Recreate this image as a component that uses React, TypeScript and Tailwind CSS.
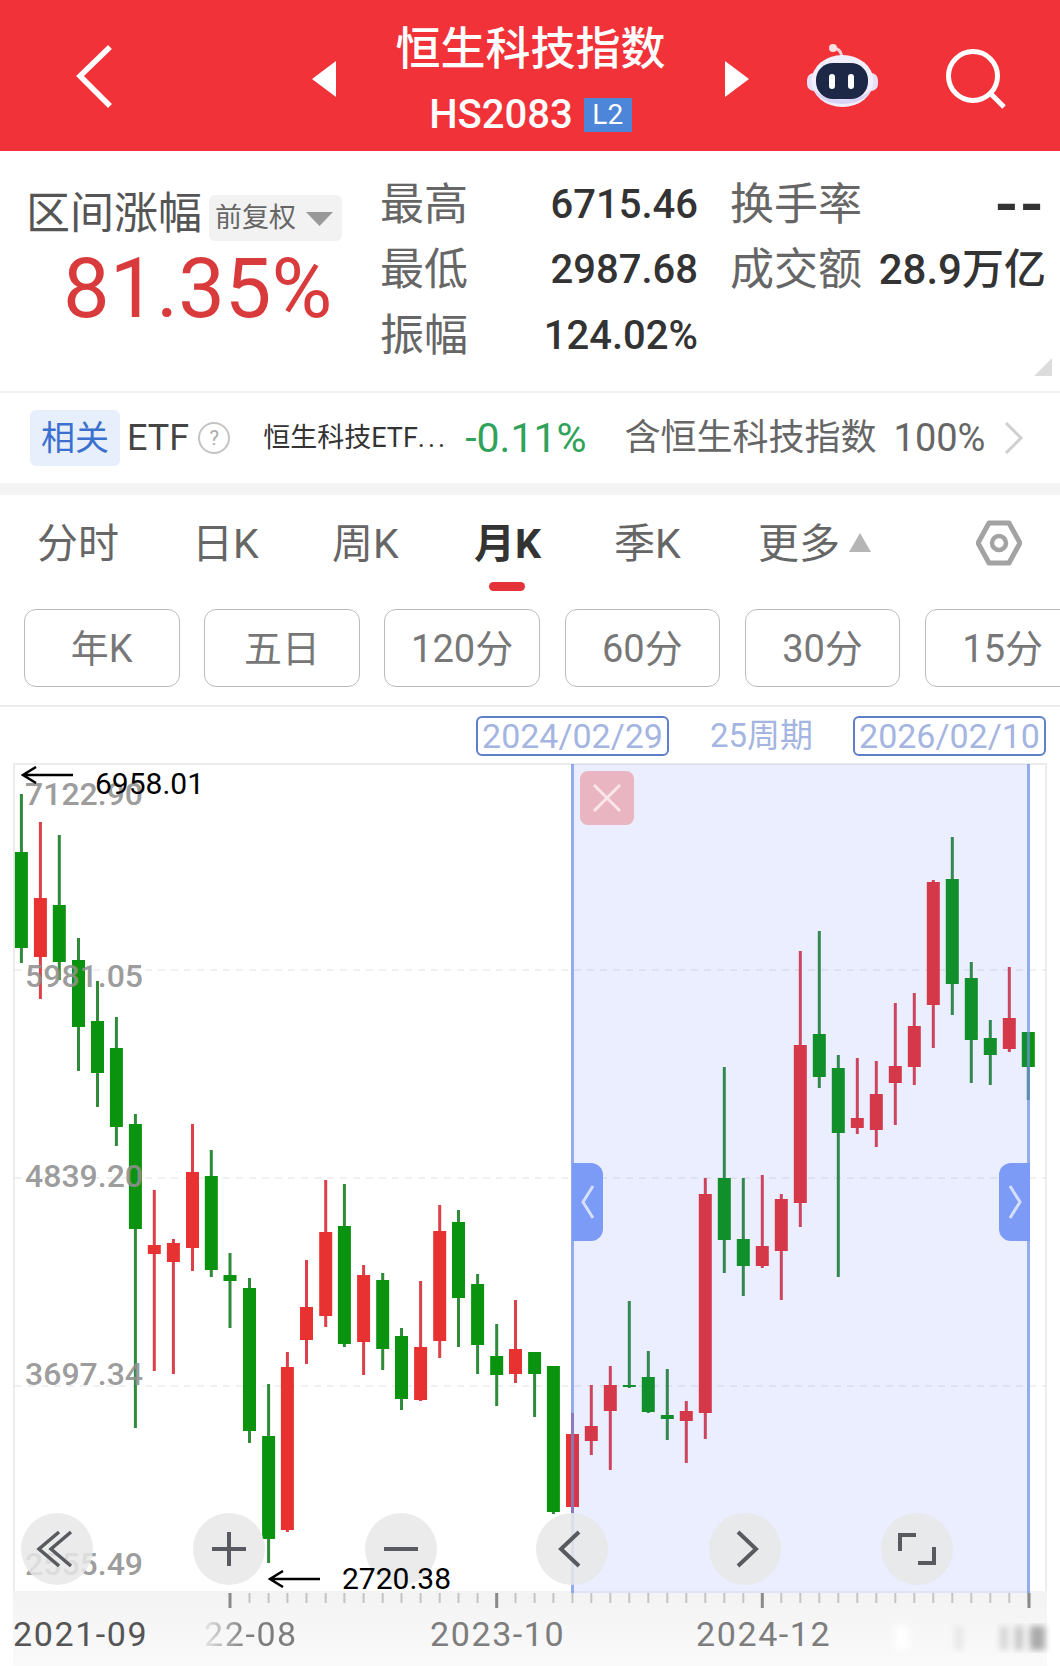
import React from "react";

// x, wickTop, wickBottom, bodyTop, bodyBottom, up
type TCandle = [number, number, number, number, number, number];

const candles: TCandle[] = [
  [21.4, 794, 963, 852, 948, 0],
  [40.4, 822, 999, 898, 957, 1],
  [59.3, 835, 980, 905, 962, 0],
  [78.5, 938, 1071, 960, 1027, 0],
  [97.5, 981, 1107, 1021, 1073, 0],
  [116.4, 1017, 1146, 1048, 1127, 0],
  [135.4, 1114, 1428, 1124, 1229, 0],
  [154.3, 1190, 1371, 1245, 1254, 1],
  [173.4, 1239, 1374, 1243, 1262, 1],
  [192.5, 1124, 1271, 1172, 1248, 1],
  [211.3, 1150, 1277, 1176, 1270, 0],
  [230, 1253, 1328, 1275, 1281, 0],
  [249.5, 1278, 1443, 1288, 1431, 0],
  [268.6, 1384, 1563, 1436, 1539, 0],
  [287.4, 1352, 1532, 1367, 1530, 1],
  [306.5, 1260, 1364, 1307, 1340, 1],
  [325.7, 1180, 1327, 1232, 1316, 1],
  [344.4, 1184, 1347, 1226, 1344, 0],
  [363.6, 1265, 1375, 1275, 1342, 1],
  [382.7, 1273, 1370, 1280, 1349, 0],
  [401.5, 1328, 1410, 1336, 1399, 0],
  [420.6, 1281, 1401, 1347, 1400, 1],
  [439.7, 1205, 1358, 1231, 1341, 1],
  [458.5, 1210, 1347, 1222, 1298, 0],
  [477.6, 1274, 1374, 1284, 1345, 0],
  [496.7, 1324, 1406, 1356, 1375, 0],
  [515.5, 1300, 1383, 1349, 1374, 1],
  [534.6, 1352, 1417, 1352, 1374, 0],
  [553.4, 1366, 1514, 1366, 1512, 0],
  [572.5, 1413, 1513, 1434, 1507, 1],
  [591.3, 1385, 1455, 1426, 1441, 1],
  [610.3, 1366, 1470, 1385, 1411, 1],
  [629.3, 1301, 1388, 1385, 1387, 0],
  [648.3, 1351, 1413, 1377, 1412, 0],
  [667.3, 1369, 1440, 1415, 1419, 0],
  [686.3, 1401, 1463, 1411, 1421, 1],
  [705.3, 1178, 1439, 1194, 1413, 1],
  [724.3, 1067, 1273, 1178, 1240, 0],
  [743.3, 1178, 1296, 1239, 1266, 0],
  [762.3, 1175, 1268, 1246, 1266, 1],
  [781.3, 1194, 1300, 1199, 1251, 1],
  [800.3, 951, 1227, 1045, 1203, 1],
  [819.3, 931, 1088, 1034, 1077, 0],
  [838.3, 1055, 1277, 1068, 1133, 0],
  [857.3, 1058, 1134, 1118, 1128, 1],
  [876.3, 1061, 1147, 1094, 1130, 1],
  [895.3, 1003, 1125, 1066, 1083, 1],
  [914.3, 993, 1085, 1026, 1067, 1],
  [933.3, 880, 1048, 882, 1005, 1],
  [952.3, 837, 1015, 879, 984, 0],
  [971.3, 962, 1083, 978, 1040, 0],
  [990.3, 1020, 1085, 1038, 1055, 0],
  [1009.3, 967, 1052, 1018, 1049, 1],
  [1028.3, 1032, 1100, 1032, 1067, 0],
];

const tabs = [
  { label: "分时", width: "w-[155px]" },
  { label: "日K", width: "w-[140px]" },
  { label: "周K", width: "w-[142px]" },
  { label: "月K", width: "w-[140px]", active: true },
  { label: "季K", width: "w-[144px]" },
];

const periods = ["年K", "五日", "120分", "60分", "30分", "15分"];

const stats = [
  { label: "最高", value: "6715.46", label2: "换手率", value2: "--", value2Class: "text-[66px] tracking-[3px]" },
  { label: "最低", value: "2987.68", label2: "成交额", value2: "28.9万亿", value2Class: "text-[42px]" },
  { label: "振幅", value: "124.02%", label2: "", value2: "", value2Class: "" },
];

const axisLabels = [
  { text: "7122.90", className: "top-[15px]" },
  { text: "5981.05", className: "top-[197px]" },
  { text: "4839.20", className: "top-[397px]" },
  { text: "3697.34", className: "top-[595px]" },
  { text: "2555.49", className: "top-[785px]" },
];

const Robot = () => (
  <svg width="73" height="66" viewBox="0 0 73 66" className="shrink-0">
    <path d="M27 5 C32 5 35 8 36 14" fill="none" stroke="#f7cfd4" strokeWidth="3" strokeLinecap="round" />
    <circle cx="27" cy="5" r="4" fill="#fbdfe2" />
    <rect x="1" y="30" width="71" height="18" rx="7" fill="#e7dff5" />
    <ellipse cx="36.5" cy="38" rx="31" ry="26" fill="#f1effc" />
    <path d="M8 46 C14 66 59 66 65 46 C56 60 17 60 8 46 Z" fill="#d9d3f5" />
    <rect x="10" y="20" width="52" height="36" rx="17" fill="#1d2746" />
    <rect x="23" y="31" width="6" height="15" rx="3" fill="#fff" />
    <rect x="42" y="31" width="6" height="15" rx="3" fill="#fff" />
  </svg>
);

const Header = () => (
  <div className="flex h-[151px] items-start bg-[#f13239] text-white">
    <svg width="36" height="63" viewBox="0 0 36 63" className="ml-[76px] mt-[45px] shrink-0">
      <path d="M34 2 L4 31 L34 61" fill="none" stroke="#fff" strokeWidth="5.5" />
    </svg>
    <svg width="24" height="36" viewBox="0 0 24 36" className="ml-[200px] mt-[61px] shrink-0">
      <path d="M24 0 V36 L0 18 Z" fill="#fff" />
    </svg>
    <div className="flex w-[389px] flex-col items-center pt-[25px]">
      <div className="text-[45px] font-medium leading-[50px]">恒生科技指数</div>
      <div className="mt-[23px] flex h-[34px] items-center gap-[11px]">
        <span className="text-[40px] font-medium leading-[34px]">HS2083</span>
        <span className="flex h-[34px] w-[48px] items-center justify-center bg-[#4d85d9] text-[28px] leading-none">L2</span>
      </div>
    </div>
    <svg width="24" height="36" viewBox="0 0 24 36" className="mt-[61px] shrink-0">
      <path d="M0 0 V36 L24 18 Z" fill="#fff" />
    </svg>
    <div className="ml-[57px] mt-[43px]">
      <Robot />
    </div>
    <svg width="60" height="60" viewBox="0 0 60 60" className="ml-[67px] mt-[49px] shrink-0">
      <circle cx="27" cy="27" r="24.5" fill="none" stroke="#fff" strokeWidth="5" />
      <path d="M44 44 L58 58" fill="none" stroke="#fff" strokeWidth="5" />
    </svg>
  </div>
);

const Stats = () => (
  <div className="relative flex h-[242px] border-b-2 border-[#f0f0f0]">
    <div className="w-[380px] shrink-0 pl-[26px] pt-[36px]">
      <div className="flex items-start">
        <span className="text-[44px] leading-[54px] text-[#555]">区间涨幅</span>
        <div className="ml-[7px] mt-[8px] flex h-[46px] w-[133px] items-center rounded-md bg-[#f2f2f2] pl-[6px]">
          <span className="text-[27px] leading-none text-[#666]">前复权</span>
          <svg width="27" height="14" viewBox="0 0 27 14" className="ml-[10px] mt-[2px]">
            <path d="M0 0 H27 L13.5 14 Z" fill="#999" />
          </svg>
        </div>
      </div>
      <div className="ml-[37px] mt-[3px] text-[83px] leading-[90px] text-[#d93a3c]">81.35%</div>
    </div>
    <div className="grid h-fit w-[666px] grid-cols-[318px_316px] gap-x-[32px] pt-[21px]">
      {stats.map((row) => (
        <React.Fragment key={row.label}>
          <div className="flex h-[65.5px] items-center justify-between">
            <span className="text-[44px] leading-none text-[#666]">{row.label}</span>
            <span className="text-[40px] font-medium leading-none text-[#333]">{row.value}</span>
          </div>
          <div className="flex h-[65.5px] items-center justify-between">
            <span className="text-[44px] leading-none text-[#666]">{row.label2}</span>
            <span className={`font-medium leading-none text-[#333] ${row.value2Class}`}>{row.value2}</span>
          </div>
        </React.Fragment>
      ))}
    </div>
    <svg width="18" height="18" viewBox="0 0 18 18" className="absolute bottom-[15px] right-[8px]">
      <path d="M18 0 V18 H0 Z" fill="#dcdcdc" />
    </svg>
  </div>
);

const EtfRow = () => (
  <div className="flex h-[90px] items-center pl-[30px]">
    <span className="flex h-[56px] w-[90px] items-center justify-center rounded-md bg-[#e8effc] text-[34px] text-[#3b70cf]">相关</span>
    <span className="ml-[7px] text-[36px] leading-none text-[#444]">ETF</span>
    <span className="ml-[9px] flex h-[32px] w-[32px] items-center justify-center rounded-full border-2 border-[#c4c4c4] text-[20px] leading-none text-[#aaa]">?</span>
    <span className="ml-[33px] w-[202px] text-[27px] leading-none text-[#333]">
      恒生科技ETF<span className="tracking-[3px]">...</span>
    </span>
    <span className="text-[41px] leading-none text-[#30a25a]">-0.11%</span>
    <span className="ml-[38px] text-[36px] leading-none text-[#666]">含恒生科技指数</span>
    <span className="ml-[17px] text-[38px] leading-none text-[#666]">100%</span>
    <svg width="20" height="32" viewBox="0 0 20 32" className="ml-[19px]">
      <path d="M2 1 L17 16 L2 31" fill="none" stroke="#cfcfcf" strokeWidth="3" />
    </svg>
  </div>
);

const Tabs = () => (
  <div className="flex h-[114px] items-start pl-[37px] pt-[24px]">
    {tabs.map((tab) => (
      <div key={tab.label} className={`${tab.width} relative shrink-0`}>
        <span className={`text-[41px] leading-[50px] ${tab.active ? "font-bold text-[#333]" : "text-[#666]"}`}>{tab.label}</span>
        {tab.active && <div className="absolute left-[15px] top-[63px] h-[9px] w-[36px] rounded-full bg-[#e5333a]" />}
      </div>
    ))}
    <span className="text-[41px] leading-[50px] text-[#666]">更多</span>
    <svg width="22" height="19" viewBox="0 0 22 19" className="ml-[9px] mt-[14px]">
      <path d="M11 0 L22 19 H0 Z" fill="#b5b5b5" />
    </svg>
    <svg width="46" height="46" viewBox="0 0 46 46" className="ml-[105px] mt-[1px]">
      <path d="M13 3 H33 L44 23 L33 43 H13 L2 23 Z" fill="none" stroke="#a3a3a3" strokeWidth="5" strokeLinejoin="round" />
      <circle cx="23" cy="23" r="7" fill="none" stroke="#a3a3a3" strokeWidth="4.5" />
    </svg>
  </div>
);

const Periods = () => (
  <div className="flex h-[98px] gap-[24.7px] overflow-hidden border-b-2 border-[#ececec] pl-[24px]">
    {periods.map((item) => (
      <div key={item} className="flex h-[78px] w-[155.5px] shrink-0 items-center justify-center rounded-xl border border-[#bbb] pt-[2px] text-[38px] leading-none text-[#777]">
        {item}
      </div>
    ))}
  </div>
);

const DateRow = () => (
  <div className="flex h-[56px] items-start pl-[476px] pt-[9px] text-[34px] leading-none text-[#a4b5e2]">
    <span className="flex h-[40px] w-[193px] items-center justify-center rounded-md border-2 border-[#5f7fcc]">2024/02/29</span>
    <span className="ml-[41px] w-[143px] pt-[3px] text-[33px]">25周期</span>
    <span className="flex h-[40px] w-[193px] items-center justify-center rounded-md border-2 border-[#5f7fcc]">2026/02/10</span>
  </div>
);

const RoundButton = ({ className, children }: { className: string; children: React.ReactNode }) => (
  <div className={`absolute top-[750px] flex h-[72px] w-[72px] items-center justify-center rounded-full bg-[#e8e8e8]/85 ${className}`}>
    <svg width="44" height="44" viewBox="0 0 44 44" fill="none" stroke="#585a60" strokeWidth="4">
      {children}
    </svg>
  </div>
);

const Chart = () => {
  const smallTicks: number[] = [];
  for (let i = 12; i < 54; i++) smallTicks.push(candles[i][0]);
  const bigTicks = [230, 496.7, 762.3, 1029];

  return (
    <div className="relative h-[903px] w-[1060px] bg-white">
      {/* chart frame */}
      <div className="absolute left-[13px] top-0 h-[830px] w-[1034px] border-2 border-b-0 border-[#ececec]" />
      <div className="absolute left-[13px] top-[828px] h-[75px] w-[1034px] bg-gradient-to-b from-[#f3f3f3] to-[#fafafa]" />

      <svg viewBox="0 763 1060 903" className="absolute left-0 top-0 h-[903px] w-[1060px]">
        {[970, 1178, 1386].map((y) => (
          <line key={y} x1="15" x2="1046" y1={y} y2={y} stroke="#e2e2e2" strokeWidth="1" strokeDasharray="7 6" />
        ))}
        {candles.map(([x, wickTop, wickBottom, bodyTop, bodyBottom, up]) => (
          <g key={x}>
            <rect x={x - 1.5} y={wickTop} width="3" height={wickBottom - wickTop} fill={up ? "#dc4048" : "#2f8a3a"} />
            <rect x={x - 6.5} y={bodyTop} width="13" height={bodyBottom - bodyTop} fill={up ? "#e83232" : "#09930f"} />
          </g>
        ))}
        {smallTicks.map((x) => (
          <rect key={x} x={x - 1} y="1593" width="2" height="10" fill="#c4c4c4" />
        ))}
        {bigTicks.map((x) => (
          <rect key={x} x={x - 1.5} y="1593" width="3" height="15" fill="#8a8a8a" />
        ))}
        <defs>
          <filter id="smudge">
            <feGaussianBlur stdDeviation="3" />
          </filter>
        </defs>
        <g filter="url(#smudge)">
          <rect x="895" y="1626" width="14" height="24" fill="#fff" />
          <rect x="955" y="1626" width="8" height="24" fill="#e6e6e6" />
          <rect x="1000" y="1626" width="8" height="24" fill="#d4d4d4" />
          <rect x="1015" y="1626" width="8" height="24" fill="#c4c4c4" />
          <rect x="1030" y="1626" width="15" height="24" fill="#aaa" />
        </g>
      </svg>

      {axisLabels.map((label) => (
        <span key={label.text} className={`absolute left-[25px] text-[32px] font-medium leading-none text-[#8f8f8f]/90 ${label.className}`}>
          {label.text}
        </span>
      ))}

      {/* selected range */}
      <div className="absolute left-[571px] top-[1px] h-[829px] w-[459px] border-x-[3px] border-[#6f8fe6]/70 bg-[#4f70f5]/[0.12]" />
      <div className="absolute left-[580px] top-[8px] flex h-[54px] w-[54px] items-center justify-center rounded-lg bg-[#e9b5c0]">
        <svg width="30" height="30" viewBox="0 0 30 30" fill="none" stroke="#fbe6e9" strokeWidth="3">
          <path d="M2 2 L28 28 M28 2 L2 28" />
        </svg>
      </div>
      <div className="absolute left-[572px] top-[400px] flex h-[78px] w-[31px] items-center justify-center rounded-r-xl bg-[#7c9bf6]">
        <svg width="14" height="34" viewBox="0 0 14 34" fill="none" stroke="#d6e0fb" strokeWidth="3">
          <path d="M12 1 L2 17 L12 33" />
        </svg>
      </div>
      <div className="absolute left-[999px] top-[400px] flex h-[78px] w-[31px] items-center justify-center rounded-l-xl bg-[#7c9bf6]">
        <svg width="14" height="34" viewBox="0 0 14 34" fill="none" stroke="#d6e0fb" strokeWidth="3">
          <path d="M2 1 L12 17 L2 33" />
        </svg>
      </div>

      {/* hand drawn notes on the screenshot */}
      <svg width="52" height="18" viewBox="0 0 52 18" className="absolute left-[21px] top-[3px]">
        <path d="M52 9 H2 M15 1 L2 9 L15 17" fill="none" stroke="#000" strokeWidth="2.5" />
      </svg>
      <span className="absolute left-[95px] top-[3px] text-[30px] leading-[36px] text-black">6958.01</span>

      <RoundButton className="left-[21px]">
        <path d="M24 5 L4 22 L24 39 M36 5 L16 22 L36 39" strokeWidth="3.5" />
      </RoundButton>
      <RoundButton className="left-[193px]">
        <path d="M22 5 V39 M5 22 H39" />
      </RoundButton>
      <RoundButton className="left-[365px]">
        <path d="M5 22 H39" />
      </RoundButton>
      <RoundButton className="left-[536px]">
        <path d="M29 5 L11 22 L29 39" />
      </RoundButton>
      <RoundButton className="left-[709px]">
        <path d="M15 5 L33 22 L15 39" />
      </RoundButton>
      <RoundButton className="left-[881px]">
        <path d="M21 8 H5 V24 M23 36 H39 V20" />
      </RoundButton>

      <svg width="52" height="18" viewBox="0 0 52 18" className="absolute left-[268px] top-[807px]">
        <path d="M52 9 H2 M15 1 L2 9 L15 17" fill="none" stroke="#000" strokeWidth="2.5" />
      </svg>
      <span className="absolute left-[342px] top-[798px] text-[30px] leading-[36px] text-black">2720.38</span>

      {[
        { text: "2021-09", left: "left-[13px]", color: "text-[#555]" },
        { text: "2023-10", left: "left-[430px]", color: "text-[#7d7d7d]" },
        { text: "2024-12", left: "left-[696px]", color: "text-[#7d7d7d]" },
      ].map((date) => (
        <span key={date.text} className={`absolute top-[853px] text-[34px] leading-[36px] tracking-[1.6px] ${date.left} ${date.color}`}>
          {date.text}
        </span>
      ))}
      <span className="absolute left-[204px] top-[853px] bg-gradient-to-r from-[#e8e8e8] to-[#7d7d7d] to-[45%] bg-clip-text text-[34px] leading-[36px] tracking-[1.6px] text-transparent">
        22-08
      </span>
    </div>
  );
};

export default function App() {
  return (
    <div className="h-[1666px] w-[1060px] overflow-hidden bg-white [font-family:Roboto,'Noto_Sans_CJK_SC',sans-serif]">
      <Header />
      <Stats />
      <EtfRow />
      <div className="h-[12px] bg-[#f4f4f4]" />
      <Tabs />
      <Periods />
      <DateRow />
      <Chart />
    </div>
  );
}
